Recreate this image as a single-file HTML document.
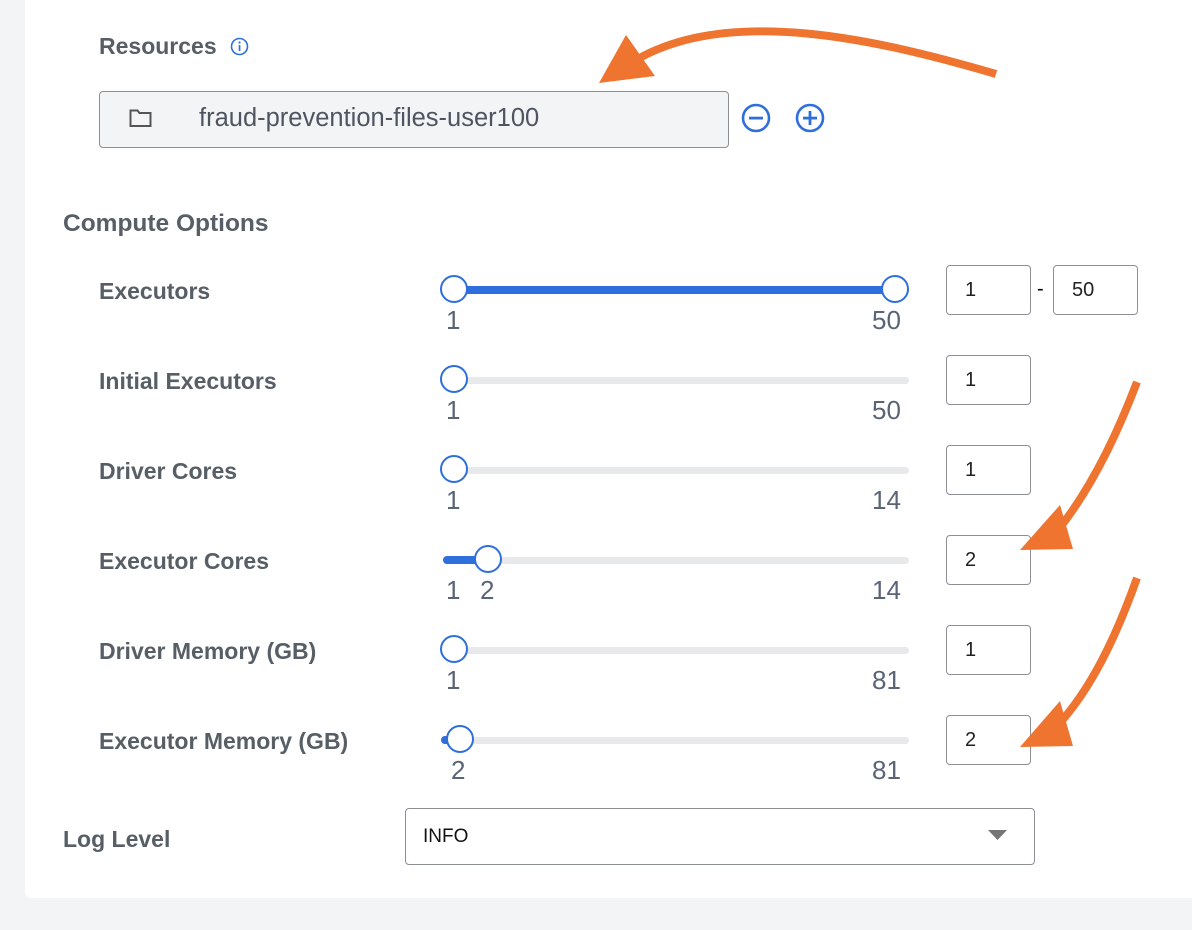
<!DOCTYPE html>
<html><head><meta charset="utf-8"><style>
*{margin:0;padding:0;box-sizing:border-box}
body{width:1192px;height:930px;background:#f3f4f6;position:relative;overflow:hidden;font-family:"Liberation Sans",Arial,sans-serif}
.panel{position:absolute;left:25px;top:0;width:1167px;height:898px;background:#fff;border-bottom-left-radius:6px}
.lbl{position:absolute;font-weight:bold;font-size:23px;color:#575e66}
.num{position:absolute;font-size:26px;color:#5b6476}
.inp{position:absolute;width:85px;height:50px;border:1px solid #8c9096;border-radius:4px;background:#fff;font-size:20px;color:#222;padding:13px 0 0 18px}
.track{position:absolute;left:443px;width:466px;height:7px;border-radius:4px;background:#e8e9eb}
.fill{position:absolute;height:7px;border-radius:4px;background:#2f6fdb}
.thumb{position:absolute;width:28px;height:28px;border-radius:50%;border:2.5px solid #2f6fdb;background:#fff}
</style></head><body>
<div class="panel"></div>
<div class="lbl" style="left:99px;top:33px">Resources</div>
<svg style="position:absolute;left:230px;top:37px" width="19" height="19" viewBox="0 0 19 19"><circle cx="9.5" cy="9.5" r="8" fill="none" stroke="#2f6fdb" stroke-width="1.6"/><rect x="8.7" y="8" width="1.7" height="6" fill="#2f6fdb"/><circle cx="9.5" cy="5.5" r="1.1" fill="#2f6fdb"/></svg>
<div style="position:absolute;left:99px;top:91px;width:630px;height:57px;background:#f3f4f6;border:1px solid #8c9096;border-radius:4px"></div>
<svg style="position:absolute;left:129px;top:107px" width="24" height="22" viewBox="0 0 24 22"><path d="M1.5 3.5h7l2 2.5h11v13h-20z" fill="none" stroke="#555" stroke-width="2"/></svg>
<div style="position:absolute;left:199px;top:104px;font-size:25.5px;color:#4f5560">fraud-prevention-files-user100</div>
<svg style="position:absolute;left:741px;top:103px" width="30" height="30" viewBox="0 0 30 30"><circle cx="15" cy="15" r="13" fill="none" stroke="#2f6fdb" stroke-width="2.6"/><rect x="8" y="13.7" width="14" height="2.8" fill="#2f6fdb"/></svg>
<svg style="position:absolute;left:795px;top:103px" width="30" height="30" viewBox="0 0 30 30"><circle cx="15" cy="15" r="13" fill="none" stroke="#2f6fdb" stroke-width="2.6"/><rect x="8" y="13.7" width="14" height="2.8" fill="#2f6fdb"/><rect x="13.6" y="8" width="2.8" height="14" fill="#2f6fdb"/></svg>
<div class="lbl" style="left:63px;top:210px;font-size:24.5px">Compute Options</div>

<div class="lbl" style="left:99px;top:278px">Executors</div>
<div class="track" style="top:287px"></div><div class="fill" style="left:443px;top:286px;width:466px;height:8px"></div>
<div class="thumb" style="left:440px;top:275px"></div><div class="thumb" style="left:881px;top:275px"></div>
<div class="num" style="left:446px;top:305px">1</div><div class="num" style="left:872px;top:305px">50</div>
<div class="inp" style="left:946px;top:265px">1</div>
<div style="position:absolute;left:1037px;top:278px;font-size:20px">-</div>
<div class="inp" style="left:1053px;top:265px">50</div>

<div class="lbl" style="left:99px;top:368px">Initial Executors</div>
<div class="track" style="top:377px"></div>
<div class="thumb" style="left:440px;top:365px"></div>
<div class="num" style="left:446px;top:395px">1</div><div class="num" style="left:872px;top:395px">50</div>
<div class="inp" style="left:946px;top:355px">1</div>

<div class="lbl" style="left:99px;top:458px">Driver Cores</div>
<div class="track" style="top:467px"></div>
<div class="thumb" style="left:440px;top:455px"></div>
<div class="num" style="left:446px;top:485px">1</div><div class="num" style="left:872px;top:485px">14</div>
<div class="inp" style="left:946px;top:445px">1</div>

<div class="lbl" style="left:99px;top:548px">Executor Cores</div>
<div class="track" style="top:557px"></div><div class="fill" style="left:443px;top:556px;width:45px;height:8px"></div>
<div class="thumb" style="left:474px;top:545px"></div>
<div class="num" style="left:446px;top:575px">1</div><div class="num" style="left:480px;top:575px">2</div><div class="num" style="left:872px;top:575px">14</div>
<div class="inp" style="left:946px;top:535px">2</div>

<div class="lbl" style="left:99px;top:638px">Driver Memory (GB)</div>
<div class="track" style="top:647px"></div>
<div class="thumb" style="left:440px;top:635px"></div>
<div class="num" style="left:446px;top:665px">1</div><div class="num" style="left:872px;top:665px">81</div>
<div class="inp" style="left:946px;top:625px">1</div>

<div class="lbl" style="left:99px;top:728px">Executor Memory (GB)</div>
<div class="track" style="top:737px"></div><div class="fill" style="left:441px;top:736px;width:14px;height:8px"></div>
<div class="thumb" style="left:446px;top:725px"></div>
<div class="num" style="left:451px;top:755px">2</div><div class="num" style="left:872px;top:755px">81</div>
<div class="inp" style="left:946px;top:715px">2</div>

<div class="lbl" style="left:63px;top:826px">Log Level</div>
<div style="position:absolute;left:405px;top:808px;width:630px;height:57px;border:1px solid #8c9096;border-radius:4px;background:#fff"></div>
<div style="position:absolute;left:423px;top:826px;font-size:19px;color:#111">INFO</div>
<svg style="position:absolute;left:988px;top:830px" width="20" height="12"><path d="M0 0h19l-9.5 10z" fill="#757575"/></svg>

<svg style="position:absolute;left:0;top:0" width="1192" height="930">
<g fill="none" stroke="#ee7430" stroke-width="8">
<path d="M996 74 C 880 40, 730 5, 636 60"/>
<path d="M1137 382 C 1115 440, 1090 490, 1058 530"/>
<path d="M1137 578 C 1115 640, 1090 690, 1058 725"/>
</g>
<g fill="#ee7430">
<polygon points="599,83 626,35 655,76"/>
<polygon points="1020,550 1073,549 1060,505"/>
<polygon points="1020,747 1073,746 1060,701"/>
</g>
</svg>
</body></html>
